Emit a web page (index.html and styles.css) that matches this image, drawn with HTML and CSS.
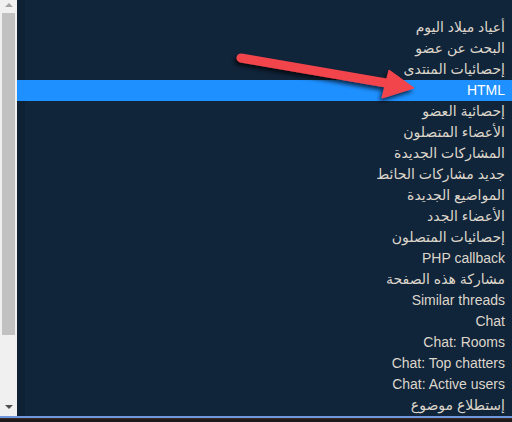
FILE: index.html
```html
<html>
  <head>
    <title>Page options</title>
    <link rel="stylesheet" href="styles.css">
  </head>
  <body>
    <div class="listbox">
      <div class="scrollbar">
        <span class="arrow up"></span>
        <div class="thumb"></div>
        <span class="arrow down"></span>
      </div>
      <ul class="options" dir="rtl">
        <li>أعياد ميلاد اليوم</li>
        <li>البحث عن عضو</li>
        <li>إحصائيات المنتدى</li>
        <li class="selected">HTML</li>
        <li>إحصائية العضو</li>
        <li>الأعضاء المتصلون</li>
        <li>المشاركات الجديدة</li>
        <li>جديد مشاركات الحائط</li>
        <li>المواضيع الجديدة</li>
        <li>الأعضاء الجدد</li>
        <li>إحصائيات المتصلون</li>
        <li>PHP callback</li>
        <li>مشاركة هذه الصفحة</li>
        <li>Similar threads</li>
        <li>Chat</li>
        <li>Chat: Rooms</li>
        <li>Chat: Top chatters</li>
        <li>Chat: Active users</li>
        <li>إستطلاع موضوع</li>
      </ul>
      <svg class="pointer" width="512" height="416" viewBox="0 0 512 416">
        <defs>
          <filter id="shade" x="-10%" y="-30%" width="120%" height="160%">
            <feDropShadow dx="-2" dy="3" stdDeviation="2" flood-color="#000000" flood-opacity="0.7" />
          </filter>
        </defs>
        <g filter="url(#shade)" fill="#f2444b" stroke="#f2444b">
          <line x1="241" y1="58" x2="392" y2="84" stroke-width="9" stroke-linecap="round" />
          <polygon points="389,70 414,88 382,98" stroke-width="1" stroke-linejoin="round" />
        </g>
      </svg>
    </div>
    <div class="footer"></div>
  </body>
</html>
```
FILE: styles.css
```css
body {
  margin: 0;
  background-color: #1c1a1a;
  font-family: "Liberation Sans", "DejaVu Sans", sans-serif;
  font-size: 14px;
}
.listbox {
  position: relative;
  display: flex;
  height: 416px;
  border-bottom: 2px solid #6f98dc;
  background-color: #10243a;
  overflow: hidden;
}
.scrollbar {
  position: relative;
  width: 17px;
  flex: none;
  background-color: #f0f0f0;
}
.thumb {
  position: absolute;
  left: 2px;
  top: 13px;
  width: 13px;
  height: 322px;
  background-color: #c1c1c1;
}
.arrow {
  position: absolute;
  left: 5px;
  width: 0;
  height: 0;
  border-left: 4px solid transparent;
  border-right: 4px solid transparent;
}
.arrow.up {
  top: 3px;
  border-bottom: 4px solid #a3a3a3;
}
.arrow.down {
  top: 405px;
  border-top: 4px solid #505050;
}
.options {
  flex: 1;
  margin: 0;
  padding: 17px 0 0 0;
  list-style: none;
  color: #ddd6ca;
  background: linear-gradient(to right, #0d2034 8px, transparent 8px);
}
.options li {
  height: 21px;
  line-height: 21px;
  padding-right: 7px;
  white-space: nowrap;
}
.options li.selected {
  background-color: #1e90ff;
  color: #ffffff;
}
.pointer {
  position: absolute;
  left: 0;
  top: 0;
}
.footer {
  height: 4px;
  border-top: 1px solid #3a2a22;
}
```
